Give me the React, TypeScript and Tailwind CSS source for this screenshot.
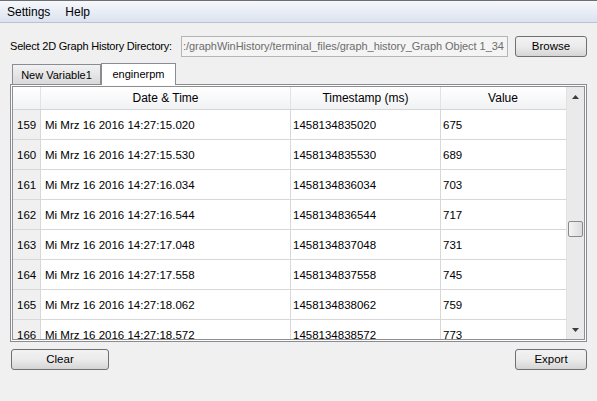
import React from 'react';

const rows = [
  { n: 159, time: '15.020', ts: '1458134835020', value: 675 },
  { n: 160, time: '15.530', ts: '1458134835530', value: 689 },
  { n: 161, time: '16.034', ts: '1458134836034', value: 703 },
  { n: 162, time: '16.544', ts: '1458134836544', value: 717 },
  { n: 163, time: '17.048', ts: '1458134837048', value: 731 },
  { n: 164, time: '17.558', ts: '1458134837558', value: 745 },
  { n: 165, time: '18.062', ts: '1458134838062', value: 759 },
  { n: 166, time: '18.572', ts: '1458134838572', value: 773 },
];

const btn =
  'h-[21px] rounded-[3px] border border-[#707070] bg-gradient-to-b from-[#f2f2f2] via-[#ebebeb] to-[#d5d5d5] text-[11.5px] text-black flex items-center justify-center';

export default function App() {
  return (
    <div
      className="w-[597px] h-[401px] bg-[#f0f0f0] flex flex-col text-[11px] text-black overflow-hidden"
      style={{ fontFamily: '"Liberation Sans", Arial, sans-serif' }}
    >
      {/* menu bar */}
      <div className="h-[23px] border-t border-[#6e6e6e] border-b border-b-[#b9c3d3] bg-gradient-to-b from-[#f6f8fc] to-[#dbe3f0] flex items-center pl-[7px] gap-[15px] text-[12px]">
        <span>Settings</span>
        <span>Help</span>
      </div>

      {/* directory row */}
      <div className="flex items-center mt-[13px] pl-[10px] pr-[10px] h-[21px]">
        <span className="w-[171px] whitespace-nowrap tracking-[-0.2px]">Select 2D Graph History Directory:</span>
        <div className="w-[327px] h-[21px] border border-[#b5b5b5] bg-[#f4f4f4] text-[#6d6d6d] flex items-center overflow-hidden whitespace-nowrap pl-[1px] tracking-[-0.05px]">
          :/graphWinHistory/terminal_files/graph_history_Graph Object 1_34
        </div>
        <button className={`${btn} ml-[7px] w-[72px]`}>Browse</button>
      </div>

      {/* tabs */}
      <div className="flex items-end mt-[5px] ml-[12px] h-[22px]">
        <div className="w-[89px] h-[20px] border border-[#898c95] border-b-0 bg-gradient-to-b from-[#f2f2f2] to-[#d9d9d9] flex items-center justify-center pt-px">
          New Variable1
        </div>
        <div className="w-[75px] h-[22px] border border-[#898c95] border-b-0 bg-white flex items-center justify-center -mb-px relative z-10">
          enginerpm
        </div>
      </div>

      {/* tab pane */}
      <div className="mx-[10px] h-[258px] border border-[#898c95] bg-[#fcfcfc] p-px">
        <div className="h-full border border-[#8e8f8f] bg-white flex overflow-hidden">
          <div className="flex-1 flex flex-col overflow-hidden">
            {/* header */}
            <div className="h-[23px] shrink-0 grid grid-cols-[28px_250px_150px_124px] border-b border-[#d5d5d5] bg-gradient-to-b from-white to-[#f1f2f4] text-[12px]">
              <div className="border-r border-[#e2e3e5]" />
              <div className="border-r border-[#e2e3e5] flex items-center justify-center">Date &amp; Time</div>
              <div className="border-r border-[#e2e3e5] flex items-center justify-center">Timestamp (ms)</div>
              <div className="flex items-center justify-center">Value</div>
            </div>
            {/* body */}
            {rows.map((r) => (
              <div key={r.n} className="h-[30px] shrink-0 grid grid-cols-[28px_250px_150px_124px] border-b border-[#d8d8d8] text-[11.5px]">
                <div className="bg-[#f0f0f0] border-r border-[#d8d8d8] flex items-center pl-[4px] pt-[2px]">{r.n}</div>
                <div className="border-r border-[#d8d8d8] flex items-center pl-[4px] pt-[2px]">
                  Mi Mrz 16 2016 14:27:{r.time}
                </div>
                <div className="border-r border-[#d8d8d8] flex items-center pl-[2px] pt-[2px]">{r.ts}</div>
                <div className="flex items-center pl-[2px] pt-[2px]">{r.value}</div>
              </div>
            ))}
          </div>
          {/* scrollbar */}
          <div className="w-[18px] shrink-0 bg-[#eaeaea] border-l border-[#e2e2e2] flex flex-col items-center">
            <div className="h-[19px] flex items-center justify-center">
              <svg width="7" height="4" viewBox="0 0 7 4"><path d="M3.5 0 L7 4 L0 4 Z" fill="#3c3c3c" /></svg>
            </div>
            <div className="mt-[115px] w-[15px] h-[16px] rounded-[2px] border border-[#8a8a8a] bg-gradient-to-r from-[#f4f4f4] to-[#dcdcdc]" />
            <div className="flex-1" />
            <div className="h-[19px] flex items-center justify-center">
              <svg width="7" height="4" viewBox="0 0 7 4"><path d="M0 0 L7 0 L3.5 4 Z" fill="#3c3c3c" /></svg>
            </div>
          </div>
        </div>
      </div>

      {/* buttons */}
      <div className="flex justify-between mt-[7px] pl-[11px] pr-[10px]">
        <button className={`${btn} w-[98px]`}>Clear</button>
        <button className={`${btn} w-[72px]`}>Export</button>
      </div>
    </div>
  );
}
